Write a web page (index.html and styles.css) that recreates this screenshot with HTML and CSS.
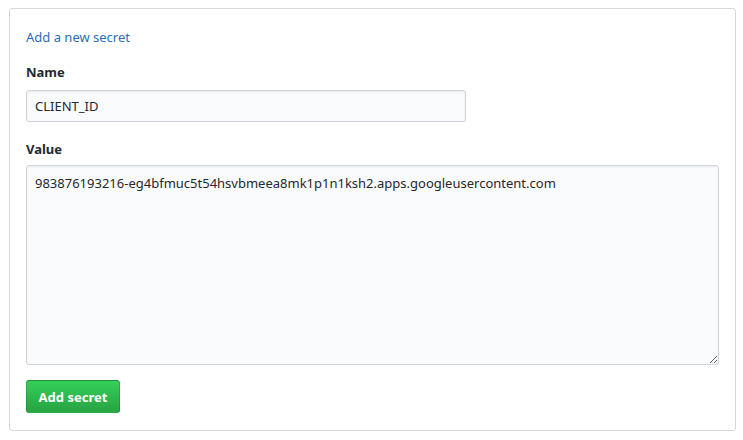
FILE: index.html
```html
<!DOCTYPE html>
<html>
<head>
<meta charset="utf-8">
<link rel="stylesheet" href="styles.css">
</head>
<body>
<div class="box">
  <a class="link" href="#">Add a new secret</a>
  <form class="form">
    <div class="group">
      <label class="label">Name</label>
      <input class="input" type="text" value="CLIENT_ID">
    </div>
    <div class="group group-value">
      <label class="label">Value</label>
      <textarea class="textarea">983876193216-eg4bfmuc5t54hsvbmeea8mk1p1n1ksh2.apps.googleusercontent.com</textarea>
    </div>
    <button class="btn" type="button">Add secret</button>
  </form>
</div>
</body>
</html>
```
FILE: styles.css
```css
html, body {
  margin: 0;
  padding: 0;
  background: #fff;
}
body {
  font-family: "Noto Sans", "Open Sans", sans-serif;
  font-size: 13px;
  line-height: 20px;
  color: #24292e;
  padding: 8px 8px 0 9px;
}
.box {
  width: 727px;
  box-sizing: border-box;
  height: 423px;
  border: 1px solid #d6d9dc;
  border-radius: 3px;
  padding: 18px 16px 16px 16px;
  display: flex;
  flex-direction: column;
}
.link {
  color: #2d6cb5;
  text-decoration: none;
  display: block;
  line-height: 20px;
}
.form {
  display: flex;
  flex-direction: column;
  align-items: flex-start;
  margin-top: 15px;
}
.group {
  display: flex;
  flex-direction: column;
  gap: 8px;
}
.group-value {
  margin-top: 17px;
  gap: 6px;
}
.label {
  font-weight: 700;
  line-height: 20px;
  color: #24292e;
}
.input, .textarea {
  box-sizing: border-box;
  font-family: inherit;
  font-size: 13px;
  line-height: 20px;
  color: #24292e;
  background: #fafbfc;
  border: 1px solid #d1d5da;
  border-radius: 3px;
  box-shadow: inset 0 1px 2px rgba(27,31,35,0.075);
  padding: 5px 8px;
  margin: 0;
  outline: none;
}
.input {
  width: 440px;
  height: 32px;
}
.textarea {
  width: 693px;
  height: 200px;
  padding: 7px 8px;
  resize: vertical;
}
.btn {
  margin-top: 15px;
  width: 94px;
  height: 33px;
  box-sizing: border-box;
  font-family: inherit;
  font-size: 13px;
  font-weight: 700;
  color: #fff;
  background: linear-gradient(#34d058, #28a745 90%);
  border: 1px solid rgba(27,31,35,0.2);
  border-radius: 3px;
  padding: 0;
  cursor: pointer;
}
```
